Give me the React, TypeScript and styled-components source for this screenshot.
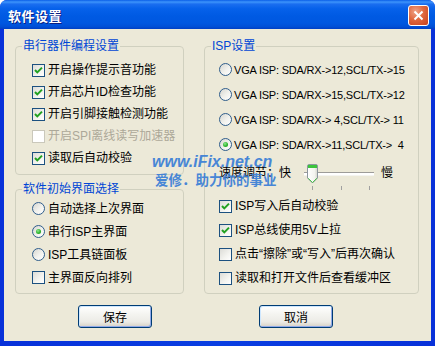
import styled, { createGlobalStyle } from 'styled-components';

const GlobalStyle = createGlobalStyle`
  html, body {
    margin: 0;
    padding: 0;
    background: #ffffff;
  }
  body {
    font-family: "Liberation Sans", "Noto Sans CJK SC", sans-serif;
    font-size: 12px;
    color: #000;
  }
`;

const Window = styled.div`
  position: relative;
  width: 435px;
  height: 346px;
  display: flex;
  flex-direction: column;
  background: linear-gradient(to right, #0831d9 0%, #0a3fe2 50%, #0831d9 100%);
  border-radius: 7px 7px 0 0;
  overflow: hidden;
`;

const TitleBar = styled.div`
  height: 29px;
  flex: none;
  display: flex;
  align-items: center;
  justify-content: space-between;
  padding: 1px 6px 0 8px;
  box-sizing: border-box;
  background: linear-gradient(
    to bottom,
    #0a5ee8 0%,
    #3d94fb 7%,
    #1a6ef0 14%,
    #0661ea 30%,
    #005ae3 55%,
    #0057e0 80%,
    #004fd6 92%,
    #003fc4 100%
  );
`;

const Title = styled.span`
  color: #fff;
  font-weight: bold;
  font-size: 13px;
  letter-spacing: 0.5px;
  text-shadow: 1px 1px 0 #0a1e80;
`;

const CloseButton = styled.div`
  width: 21px;
  height: 21px;
  box-sizing: border-box;
  border: 1px solid #fff;
  border-radius: 3px;
  background: radial-gradient(circle at 35% 30%, #f0a489 0%, #e0683f 45%, #c8401b 100%);
  display: flex;
  align-items: center;
  justify-content: center;
`;

const Body = styled.div`
  flex: 1;
  margin: 0 4px 5px 4px;
  background: #ece9d8;
  padding: 9px 12px 0 11px;
  display: grid;
  grid-template-columns: 169px 215px;
  grid-template-rows: 256px auto;
  column-gap: 20px;
  row-gap: 11px;
`;

const Column = styled.div`
  display: flex;
  flex-direction: column;
  gap: 6px;
`;

const Group = styled.fieldset`
  margin: 0;
  padding: 0;
  min-width: 0;
  border: 1px solid #d0d0bf;
  border-radius: 4px;
  box-sizing: border-box;
`;

const Legend = styled.legend`
  margin-left: 6px;
  padding: 0 1px;
  color: #0046d5;
  font-size: 12px;
  line-height: 16px;
`;

const GroupContent = styled.div<{ $pad: string }>`
  padding: ${(p) => p.$pad};
  display: flex;
  flex-direction: column;
`;

const Row = styled.div<{ $h: number; $disabled?: boolean; $gap?: number }>`
  height: ${(p) => p.$h}px;
  display: flex;
  align-items: center;
  gap: ${(p) => p.$gap ?? 3}px;
  white-space: nowrap;
  line-height: 16px;
  color: ${(p) => (p.$disabled ? '#aca899' : '#000')};
`;

const VgaLabel = styled.span`
  font-family: "Liberation Sans", sans-serif;
  font-size: 11px;
  letter-spacing: -0.2px;
  white-space: pre;
`;

const Box = styled.span<{ $disabled?: boolean }>`
  width: 13px;
  height: 13px;
  flex: none;
  box-sizing: border-box;
  border: 1px solid ${(p) => (p.$disabled ? '#cac8bb' : '#1c5180')};
  background: ${(p) =>
    p.$disabled ? '#ffffff' : 'linear-gradient(135deg, #dcdcd7 0%, #f4f4f0 60%, #ffffff 100%)'};
  display: flex;
  align-items: center;
  justify-content: center;
`;

const Radio = styled.span`
  width: 13px;
  height: 13px;
  flex: none;
  box-sizing: border-box;
  border-radius: 50%;
  border: 1px solid #2f5d8c;
  background: linear-gradient(135deg, #d6d6d0 0%, #f2f2ee 55%, #ffffff 100%);
  display: flex;
  align-items: center;
  justify-content: center;
`;

const Dot = styled.span`
  width: 5px;
  height: 5px;
  border-radius: 50%;
  background: radial-gradient(circle at 40% 35%, #8ee88e 0%, #2fb52f 55%, #1a8f1a 100%);
`;

const SpeedRow = styled.div`
  height: 37px;
  display: flex;
  align-items: flex-start;
  white-space: nowrap;
  line-height: 16px;
`;

const SpeedText = styled.span<{ $ml: number }>`
  margin-top: 8px;
  margin-left: ${(p) => p.$ml}px;
`;

const SliderWrap = styled.span`
  margin-left: 9px;
  display: flex;
`;

const ButtonCell = styled.div<{ $offset: number }>`
  padding-left: ${(p) => p.$offset}px;
`;

const Button = styled.button`
  width: 74px;
  height: 23px;
  box-sizing: border-box;
  border: 1px solid #003c74;
  border-radius: 3px;
  background: linear-gradient(to bottom, #ffffff 0%, #f4f4f0 40%, #ecebe6 75%, #d6d0c5 100%);
  box-shadow: inset 1px 1px 0 #cee7ff, inset -1px -1px 0 #90a9e8;
  font-family: "Liberation Sans", "Noto Sans CJK SC", sans-serif;
  font-size: 12px;
  color: #000;
  padding: 0;
`;

const Watermark = styled.div`
  position: absolute;
  left: 152px;
  top: 153px;
  display: flex;
  flex-direction: column;
  align-items: flex-start;
  color: #3a7ed6;
  pointer-events: none;
  opacity: 0.92;
`;

const WatermarkUrl = styled.span`
  font-family: "Liberation Sans", sans-serif;
  font-weight: bold;
  font-style: italic;
  font-size: 16px;
  line-height: 18px;
`;

const WatermarkSlogan = styled.span`
  font-family: "Noto Sans CJK SC", sans-serif;
  font-weight: bold;
  font-size: 13.5px;
  line-height: 16px;
  margin-left: 3px;
`;

const Check = () => (
  <svg width="9" height="9" viewBox="0 0 9 9">
    <path d="M1 4 L3.3 6.4 L8 1.6" fill="none" stroke="#21a121" strokeWidth="2" />
  </svg>
);

const CheckItem = (props: { label: string; checked?: boolean; disabled?: boolean; h: number }) => (
  <Row $h={props.h} $disabled={props.disabled}>
    <Box $disabled={props.disabled}>{props.checked ? <Check /> : null}</Box>
    <span>{props.label}</span>
  </Row>
);

const RadioItem = (props: { label: string; selected?: boolean; h: number; vga?: boolean }) => (
  <Row $h={props.h} $gap={props.vga ? 2 : 3}>
    <Radio>{props.selected ? <Dot /> : null}</Radio>
    {props.vga ? <VgaLabel>{props.label}</VgaLabel> : <span>{props.label}</span>}
  </Row>
);

const Slider = () => (
  <svg width="78" height="37" viewBox="0 0 78 37">
    <rect x="4" y="15" width="70" height="4" fill="#ffffff" />
    <line x1="4" y1="15.5" x2="74" y2="15.5" stroke="#9d9c99" />
    <line x1="4" y1="18.5" x2="74" y2="18.5" stroke="#f4f4f0" />
    <line x1="12.5" y1="29" x2="12.5" y2="33" stroke="#a0a0a0" />
    <line x1="41.5" y1="29" x2="41.5" y2="33" stroke="#a0a0a0" />
    <line x1="69.5" y1="29" x2="69.5" y2="33" stroke="#a0a0a0" />
    <defs>
      <linearGradient id="thumbBody" x1="0" y1="0" x2="1" y2="0">
        <stop offset="0" stopColor="#ffffff" />
        <stop offset="0.7" stopColor="#f3f3ef" />
        <stop offset="1" stopColor="#d4d4cc" />
      </linearGradient>
    </defs>
    <path
      d="M7.5 9 Q7.5 7.5 9 7.5 H16 Q17.5 7.5 17.5 9 V21 L12.5 26 L7.5 21 Z"
      fill="url(#thumbBody)"
      stroke="#8c969e"
    />
    <rect x="8" y="8" width="9" height="3" fill="#3cc43c" />
    <path d="M8.2 21.3 L12.5 25.5 L16.8 21.3" fill="none" stroke="#4cc24c" />
  </svg>
);

export default function App() {
  return (
    <>
      <GlobalStyle />
      <Window>
        <TitleBar>
          <Title>软件设置</Title>
          <CloseButton>
            <svg width="11" height="11" viewBox="0 0 11 11">
              <path d="M1.5 1.5 L9.5 9.5 M9.5 1.5 L1.5 9.5" stroke="#fff" strokeWidth="2" />
            </svg>
          </CloseButton>
        </TitleBar>
        <Body>
          <Column>
            <Group>
              <Legend>串行器件编程设置</Legend>
              <GroupContent $pad="5px 0 5px 16px">
                <CheckItem h={22} checked label="开启操作提示音功能" />
                <CheckItem h={22} checked label="开启芯片ID检查功能" />
                <CheckItem h={22} checked label="开启引脚接触检测功能" />
                <CheckItem h={22} disabled label="开启SPI离线读写加速器" />
                <CheckItem h={22} checked label="读取后自动校验" />
              </GroupContent>
            </Group>
            <Group style={{ flex: 1 }}>
              <Legend>软件初始界面选择</Legend>
              <GroupContent $pad="0 0 4px 16px">
                <RadioItem h={23} label="自动选择上次界面" />
                <RadioItem h={23} selected label="串行ISP主界面" />
                <RadioItem h={23} label="ISP工具链面板" />
                <CheckItem h={23} label="主界面反向排列" />
              </GroupContent>
            </Group>
          </Column>
          <Group>
            <Legend>ISP设置</Legend>
            <GroupContent $pad="3px 0 0 14px">
              <RadioItem h={25} vga label="VGA ISP: SDA/RX->12,SCL/TX->15" />
              <RadioItem h={25} vga label="VGA ISP: SDA/RX->15,SCL/TX->12" />
              <RadioItem h={25} vga label="VGA ISP: SDA/RX-> 4,SCL/TX-> 11" />
              <RadioItem h={25} vga selected label="VGA ISP: SDA/RX->11,SCL/TX->  4" />
              <SpeedRow>
                <SpeedText $ml={0}>速度调节：快</SpeedText>
                <SliderWrap>
                  <Slider />
                </SliderWrap>
                <SpeedText $ml={3}>慢</SpeedText>
              </SpeedRow>
              <CheckItem h={24} checked label="ISP写入后自动校验" />
              <CheckItem h={24} checked label="ISP总线使用5V上拉" />
              <CheckItem h={24} label="点击“擦除”或“写入”后再次确认" />
              <CheckItem h={24} label="读取和打开文件后查看缓冲区" />
            </GroupContent>
          </Group>
          <ButtonCell $offset={63}>
            <Button>保存</Button>
          </ButtonCell>
          <ButtonCell $offset={55}>
            <Button>取消</Button>
          </ButtonCell>
        </Body>
        <Watermark>
          <WatermarkUrl>www.iFix.net.cn</WatermarkUrl>
          <WatermarkSlogan>爱修．助力你的事业</WatermarkSlogan>
        </Watermark>
      </Window>
    </>
  );
}
